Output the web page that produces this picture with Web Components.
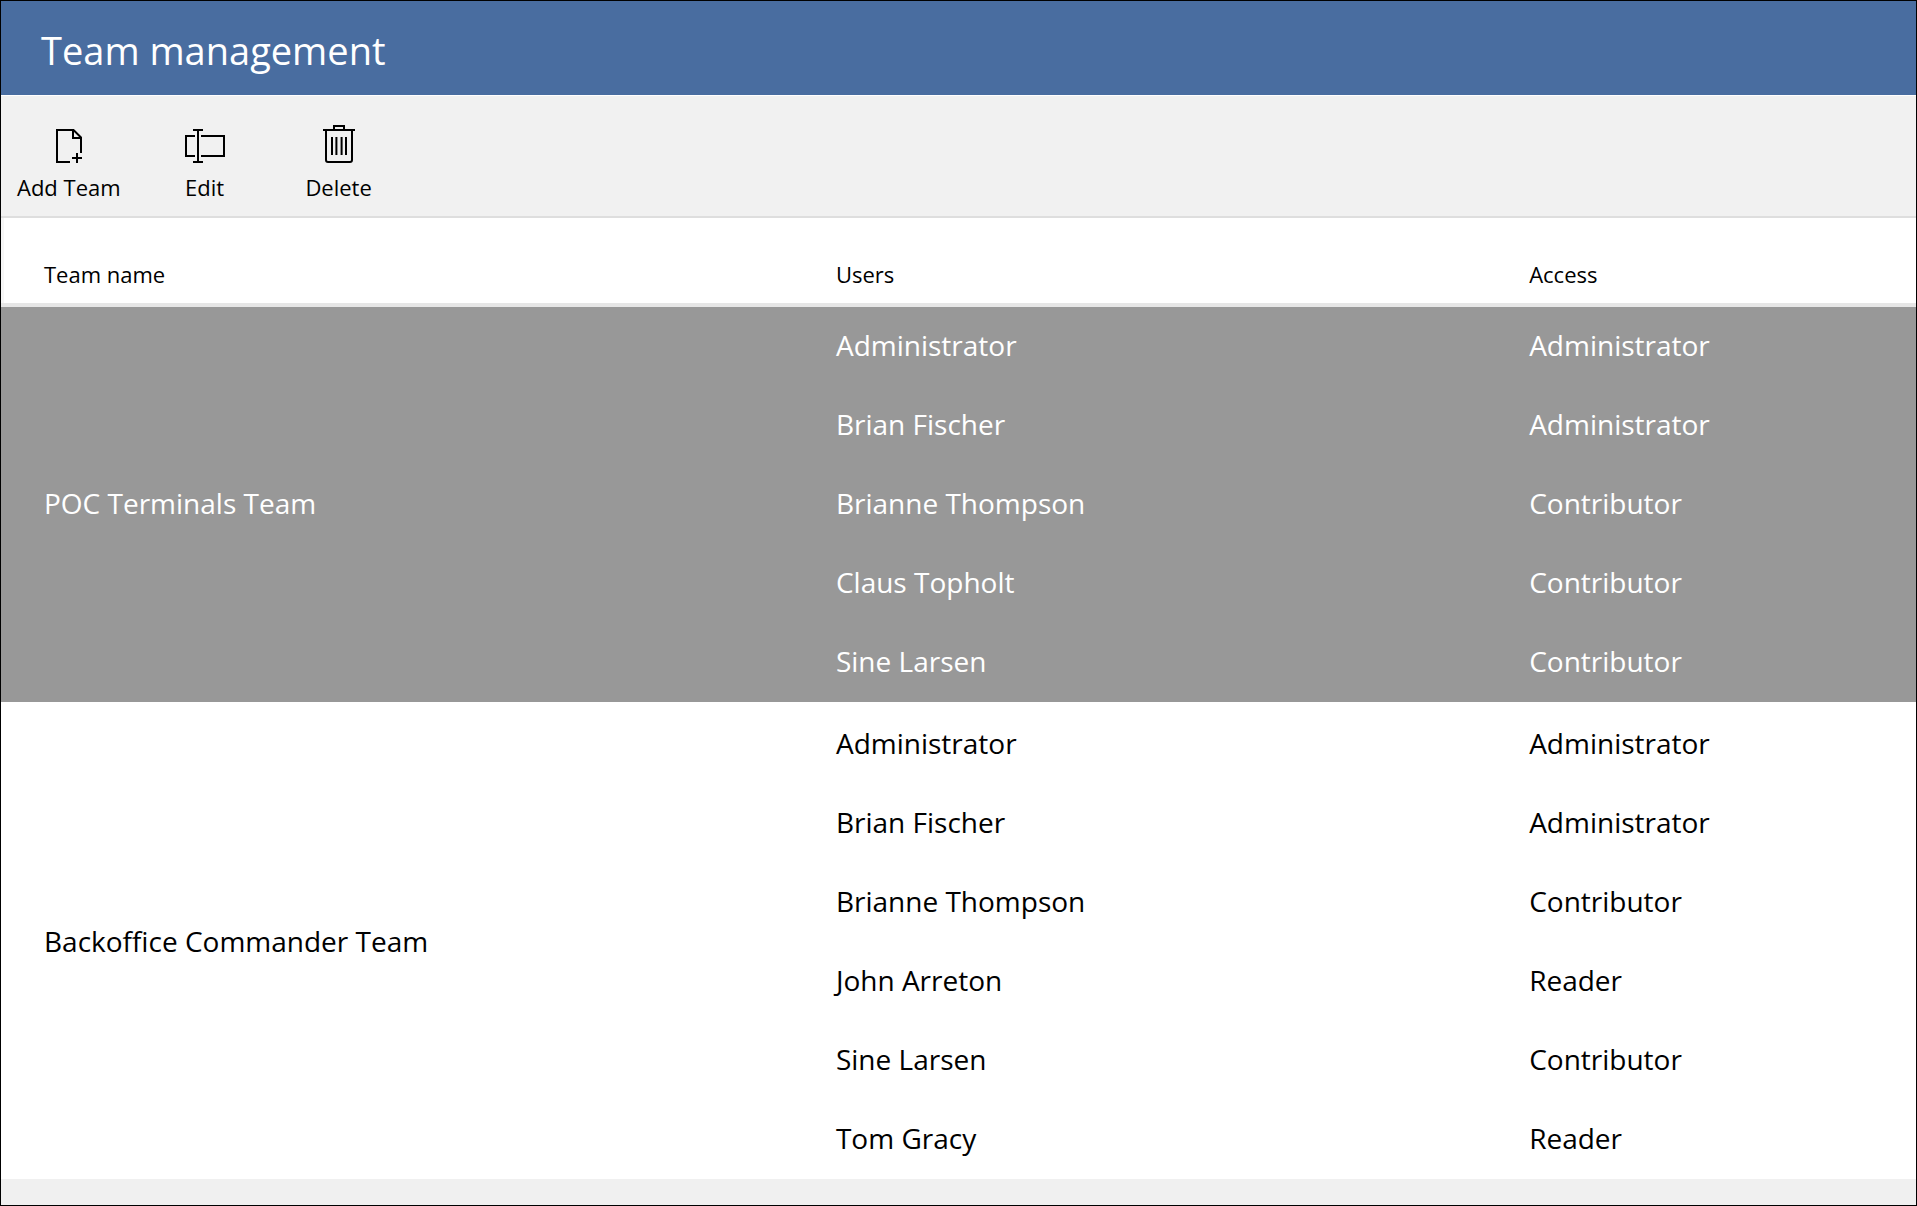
<!DOCTYPE html>
<html lang="en">
<head>
<meta charset="utf-8">
<title>Team management</title>
<style>
  body { margin: 0; }
</style>
</head>
<body>
<team-page>
  <page-header slot="header">Team management</page-header>
  <tool-bar slot="toolbar">
    <tool-button>
      <svg slot="icon" width="40" height="40" viewBox="0 0 40 40" fill="none" stroke="currentColor" stroke-width="2" aria-hidden="true"><path d="M21 38H8V6H24.5L32 13.5V29M24 6V14H32M28 29V39M23 34H33"/></svg>
      Add Team
    </tool-button>
    <tool-button>
      <svg slot="icon" width="40" height="40" viewBox="0 0 40 40" fill="none" stroke="currentColor" stroke-width="2" aria-hidden="true"><path d="M10 12H1V32H10M16 12H39V32H16M13 6V38M8 6H18M8 38H18"/></svg>
      Edit
    </tool-button>
    <tool-button>
      <svg slot="icon" width="40" height="40" viewBox="0 0 40 40" fill="none" stroke="currentColor" stroke-width="2" aria-hidden="true"><path d="M4 6H36M15 6V2H25V6M7 6V36Q7 38 9 38H31Q33 38 33 36V6"/><path d="M13 13V31M17.4 13V31M22.6 13V31M27 13V31"/></svg>
      Delete
    </tool-button>
  </tool-bar>
  <team-table></team-table>
</team-page>

<script>
  const define = (name, html, setup) => {
    const template = document.createElement('template');
    template.innerHTML = html;
    customElements.define(name, class extends HTMLElement {
      constructor() {
        super();
        this.attachShadow({ mode: 'open' }).append(template.content.cloneNode(true));
        if (setup) setup(this.shadowRoot);
      }
    });
  };

  define('team-page', `
    <style>
      :host {
        display: flex; flex-direction: column; box-sizing: border-box;
        min-height: 100vh; border: 1px solid #000; background: #f0f0f0; color: #000;
        font-family: "Segoe UI", "Open Sans", "Noto Sans", sans-serif;
      }
    </style>
    <slot name="header"></slot>
    <slot name="toolbar"></slot>
    <main><slot></slot></main>
  `);

  define('page-header', `
    <style>
      :host { display: block; background: #496da0; border-bottom: 1px solid #fff; padding: 22px 40px 18px; }
      h1 { margin: 0; font-size: 38px; line-height: 54px; font-weight: 400; color: #fff; }
    </style>
    <h1><slot></slot></h1>
  `);

  define('tool-bar', `
    <style>
      :host { display: block; background: #f1f1f1; border-bottom: 2px solid #dedede; }
      div { display: flex; gap: 2px; }
    </style>
    <div role="toolbar" aria-label="Team actions"><slot></slot></div>
  `);

  define('tool-button', `
    <style>
      :host { display: flex; }
      button {
        display: flex; flex-direction: column; align-items: center; gap: 8px;
        min-width: 132px; padding: 28px 16px 14px; border: 0; background: none;
        font: inherit; font-size: 22px; line-height: 30px; color: #000; cursor: pointer;
      }
      button:hover { background: #e4e4e4; }
    </style>
    <button type="button"><slot name="icon"></slot><span><slot></slot></span></button>
  `);

  const teams = [
    { name: 'POC Terminals Team', selected: true, users: [
      ['Administrator', 'Administrator'],
      ['Brian Fischer', 'Administrator'],
      ['Brianne Thompson', 'Contributor'],
      ['Claus Topholt', 'Contributor'],
      ['Sine Larsen', 'Contributor'],
    ] },
    { name: 'Backoffice Commander Team', users: [
      ['Administrator', 'Administrator'],
      ['Brian Fischer', 'Administrator'],
      ['Brianne Thompson', 'Contributor'],
      ['John Arreton', 'Reader'],
      ['Sine Larsen', 'Contributor'],
      ['Tom Gracy', 'Reader'],
    ] },
  ];

  define('team-table', `
    <style>
      :host { display: block; background: #fff; }
      table { width: 100%; table-layout: fixed; border-collapse: separate; border-spacing: 0; }
      .name { width: 43.6%; }
      .users { width: 36.2%; }
      th, td { padding: 0; text-align: left; font-weight: 400; box-sizing: border-box; }
      thead th { padding-top: 41px; padding-bottom: 14px; font-size: 22px; line-height: 30px; border-bottom: 4px solid #e6e6e6; }
      thead th:first-child { box-shadow: inset 3px 0 #f6f6f6; }
      tbody th, tbody td { font-size: 28px; line-height: 38px; }
      tbody td { padding: 19px 0 22px; }
      tbody th { vertical-align: middle; padding-bottom: 3px; }
      th:first-child { padding-left: 43px; }
      tbody.selected { background: #989898; color: #fff; }
      tbody + tbody::before { content: ""; display: table-row; height: 3px; }
    </style>
    <table>
      <colgroup><col class="name"><col class="users"><col></colgroup>
      <thead><tr><th scope="col">Team name</th><th scope="col">Users</th><th scope="col">Access</th></tr></thead>
    </table>
  `, root => {
    const table = root.querySelector('table');
    for (const team of teams) {
      const group = table.createTBody();
      group.classList.toggle('selected', Boolean(team.selected));
      team.users.forEach(([user, access], i) => {
        const row = group.insertRow();
        if (i === 0) {
          const head = document.createElement('th');
          head.scope = 'rowgroup';
          head.rowSpan = team.users.length;
          head.textContent = team.name;
          row.append(head);
        }
        row.insertCell().textContent = user;
        row.insertCell().textContent = access;
      });
    }
  });
</script>
</body>
</html>
